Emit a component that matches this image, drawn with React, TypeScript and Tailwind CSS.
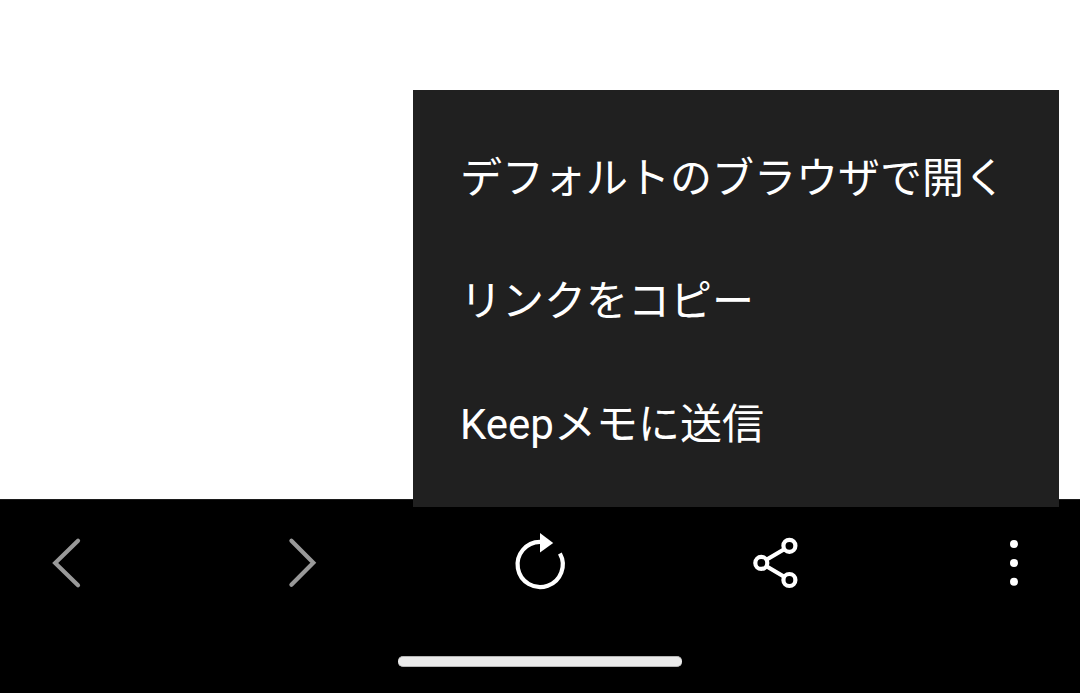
import React from 'react';

const menuItems = ['デフォルトのブラウザで開く', 'リンクをコピー', 'Keepメモに送信'];

interface NavButtonProps {
  label: string;
  disabled?: boolean;
  children: React.ReactNode;
}

function NavButton({ label, disabled, children }: NavButtonProps) {
  return (
    <button aria-label={label} disabled={disabled}
      className={disabled ? 'text-[#999999]' : 'text-white'}>
      <svg className="block size-16" viewBox="0 0 64 64" fill="none"
        stroke="currentColor" strokeWidth="4.2">
        {children}
      </svg>
    </button>
  );
}

function BrowserMenu() {
  return (
    <ul className="absolute top-[90px] right-[21px] w-[646px] bg-[#202020] py-6">
      {menuItems.map(item => (
        <li key={item} className="flex h-[123px] items-center pt-1.5 pl-[47px] text-[42px] leading-none whitespace-nowrap text-white">
          {item}
        </li>
      ))}
    </ul>
  );
}

export default function App() {
  return (
    <div lang="ja" className="relative flex h-[693px] w-[1080px] flex-col overflow-hidden bg-white font-['Roboto','Noto_Sans_CJK_JP',sans-serif]">
      <main className="flex-1" />

      <footer className="h-[194px] border-t border-[#1c1c1c] bg-black">
        <nav className="flex h-[126px] items-center justify-between px-9">
          <NavButton label="戻る" disabled>
            <path d="M42 9.8 19.2 32 42 54.2" strokeLinecap="round" />
          </NavButton>
          <NavButton label="進む" disabled>
            <path d="M19.4 9.8 41.3 31.8 19.4 53.8" strokeLinecap="round" />
          </NavButton>
          <NavButton label="再読み込み">
            <path d="M51.9 22.5A22.6 22.6 0 1 1 32 10.9" />
            <path d="M32 2v19.5l13.2-9.6z" fill="currentColor" stroke="none" />
          </NavButton>
          <NavButton label="共有">
            <path d="M22.4 28.7 40.2 18.2M22.4 35.2l17.8 10.6" />
            <circle cx="17.3" cy="31.9" r="6" />
            <circle cx="45.4" cy="14.8" r="6" />
            <circle cx="45.4" cy="49" r="6" />
          </NavButton>
          <NavButton label="メニュー">
            <g fill="currentColor" stroke="none">
              <circle cx="34" cy="13.1" r="4" />
              <circle cx="34" cy="32" r="4" />
              <circle cx="34" cy="50.8" r="4" />
            </g>
          </NavButton>
        </nav>
        <div className="mx-auto mt-[30px] h-[11px] w-[284px] rounded-[5px] border-y border-[#b4b4b4] bg-[#eaeaea]" />
      </footer>

      <BrowserMenu />
    </div>
  );
}
